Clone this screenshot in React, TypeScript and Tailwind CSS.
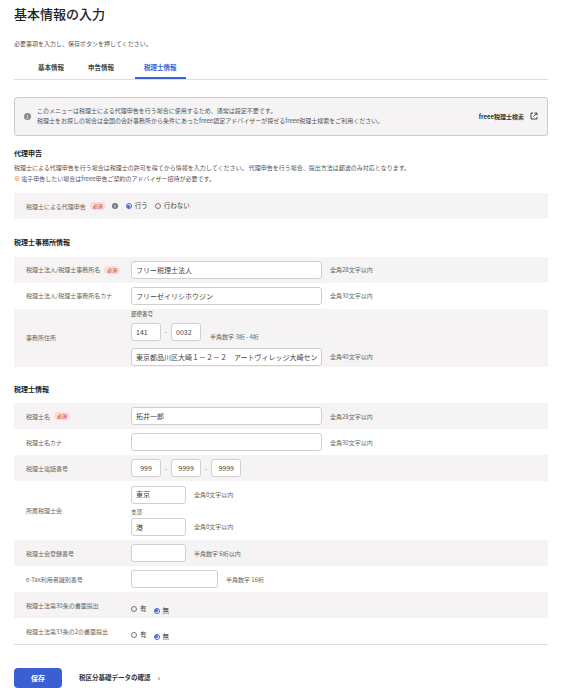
import React from "react";

const F = { fontFamily: '"Noto Sans CJK JP", "Noto Sans", sans-serif' };

const Req = () => (
  <span className="ml-1 rounded-sm bg-[#f9dede] px-[3px] text-[5px] leading-[8px] text-[#c0392b]">必須</span>
);

const Input = ({ w, value = "" }: { w: string; value?: string }) => (
  <div className={`${w} flex h-[18px] shrink-0 items-center overflow-hidden whitespace-nowrap rounded-[3px] border border-[#cfcfcf] bg-white px-[4px] text-[7px] text-[#444]`}>
    <span className="overflow-hidden">{value}</span>
  </div>
);

const Hint = ({ children }: { children: React.ReactNode }) => (
  <span className="text-[6px] text-[#666]">{children}</span>
);

const Row = ({ label, req, bg, h = "h-[26px]", children }: { label: React.ReactNode; req?: boolean; bg?: boolean; h?: string; children: React.ReactNode }) => (
  <div className={`flex items-center ${h} ${bg ? "bg-[#f5f3f3]" : "bg-white"}`}>
    <div className="flex w-[117px] items-center pl-[12px] text-[6px] text-[#666]">
      {label}
      {req && <Req />}
    </div>
    <div className="flex-1">{children}</div>
  </div>
);

const Radio = ({ on, label }: { on?: boolean; label: string }) => (
  <span className="mr-[7px] inline-flex items-center gap-[3px] text-[6.5px] text-[#444]">
    <span className={`flex h-[6px] w-[6px] items-center justify-center rounded-full border ${on ? "border-[#3a63d8]" : "border-[#777]"}`}>
      {on && <span className="h-[3px] w-[3px] rounded-full bg-[#3a63d8]" />}
    </span>
    {label}
  </span>
);

const Std = ({ value, hint }: { value?: string; hint: string }) => (
  <div className="flex items-center gap-[8px]">
    <Input w="w-[191px]" value={value} />
    <Hint>{hint}</Hint>
  </div>
);

export default function App() {
  return (
    <div style={F} className="h-[688px] w-[562px] bg-white px-[14px] pt-[4px] text-[#222]">
      <h1 className="text-[13px] font-medium leading-[20px]">基本情報の入力</h1>
      <p className="mt-[15px] text-[6px] text-[#555]">必要事項を入力し、保存ボタンを押してください。</p>
      <div className="mt-[15px] flex border-b border-[#ddd] pl-[24px] text-[6.5px] font-bold text-[#444]">
        <div className="pb-[5px]">基本情報</div>
        <div className="ml-[24px] pb-[5px]">申告情報</div>
        <div className="ml-[21px] border-b-2 border-[#3a63d8] px-[9px] pb-[4px] text-[#3a63d8]">税理士情報</div>
      </div>
      <div className="mt-[17px] flex h-[39px] items-center rounded-[3px] border border-[#ccc] bg-[#f5f3f3] px-[9px] text-[6px] text-[#555]">
        <span className="mr-[6px] flex h-[7px] w-[7px] items-center justify-center rounded-full bg-[#888] text-[5px] font-bold text-white">!</span>
        <div className="flex-1 leading-[10px]">
          <div>このメニューは税理士による代理申告を行う場合に使用するため、通常は設定不要です。</div>
          <div>税理士をお探しの場合は全国の会計事務所から条件にあったfreee認定アドバイザーが探せるfreee税理士検索をご利用ください。</div>
        </div>
        <span className="font-bold text-[#333]">freee税理士検索</span>
        <svg className="ml-[6px]" width="8" height="8" viewBox="0 0 8 8" fill="none" stroke="#333" strokeWidth="0.9">
          <path d="M3 1H1v6h6V5M4.5 1H7v2.5M7 1L3.5 4.5" />
        </svg>
      </div>
      <h2 className="mt-[12px] text-[7px] font-bold">代理申告</h2>
      <div className="mt-[4px] text-[6px] leading-[11px] text-[#555]">
        <div>税理士による代理申告を行う場合は税理士の許可を得てから情報を入力してください。 代理申告を行う場合、提出方法は郵送のみ対応となります。</div>
        <div><span className="text-[#c0392b]">※</span> 電子申告したい場合はfreee申告ご契約のアドバイザー招待が必要です。</div>
      </div>
      <div className="mt-[9px] flex h-[26px] items-center bg-[#f5f3f3] pl-[12px] text-[6px] text-[#666]">
        税理士による代理申告<Req />
        <span className="ml-[6px] mr-[8px] flex h-[6px] w-[6px] items-center justify-center rounded-full bg-[#777] text-[4px] font-bold text-white">?</span>
        <Radio on label="行う" />
        <Radio label="行わない" />
      </div>

      <h2 className="mt-[18px] text-[7px] font-bold">税理士事務所情報</h2>
      <div className="mt-[9px]">
        <Row label="税理士法人/税理士事務所名" req bg><Std value="フリー税理士法人" hint="全角28文字以内" /></Row>
        <Row label="税理士法人/税理士事務所名カナ"><Std value="フリーゼイリシホウジン" hint="全角30文字以内" /></Row>
        <Row label="事務所住所" bg h="h-[58px]">
          <div className="text-[5.5px] text-[#555]">郵便番号</div>
          <div className="mt-[2px] flex items-center gap-[4px]">
            <Input w="w-[30px]" value="141" />
            <span className="text-[6px] text-[#555]">-</span>
            <Input w="w-[30px]" value="0032" />
            <span className="ml-[5px]"><Hint>半角数字 3桁 - 4桁</Hint></span>
          </div>
          <div className="mt-[4px]"><Std value="東京都品川区大崎１－２－２　アートヴィレッジ大崎セン" hint="全角40文字以内" /></div>
        </Row>
      </div>

      <h2 className="mt-[17px] text-[7px] font-bold">税理士情報</h2>
      <div className="mt-[9px] border-b border-[#ddd]">
        <Row label="税理士名" req bg><Std value="拓井一郎" hint="全角28文字以内" /></Row>
        <Row label="税理士名カナ"><Std hint="全角30文字以内" /></Row>
        <Row label="税理士電話番号" bg>
          <div className="flex items-center gap-[4px]">
            <Input w="w-[30px] justify-center" value="999" />
            <span className="text-[6px] text-[#555]">-</span>
            <Input w="w-[30px] justify-center" value="9999" />
            <span className="text-[6px] text-[#555]">-</span>
            <Input w="w-[30px] justify-center" value="9999" />
          </div>
        </Row>
        <Row label="所属税理士会" h="h-[59px]">
          <div className="flex items-center gap-[8px]"><Input w="w-[55px]" value="東京" /><Hint>全角8文字以内</Hint></div>
          <div className="mt-[4px] text-[5.5px] text-[#555]">支部</div>
          <div className="mt-[2px] flex items-center gap-[8px]"><Input w="w-[55px]" value="港" /><Hint>全角8文字以内</Hint></div>
        </Row>
        <Row label="税理士会登録番号" bg>
          <div className="flex items-center gap-[8px]"><Input w="w-[55px]" /><Hint>半角数字 6桁以内</Hint></div>
        </Row>
        <Row label="e-Tax利用者識別番号">
          <div className="flex items-center gap-[8px]"><Input w="w-[87px]" /><Hint>半角数字 16桁</Hint></div>
        </Row>
        <Row label="税理士法第30条の書面提出" bg><Radio label="有" /><Radio on label="無" /></Row>
        <Row label="税理士法第33条の2の書面提出"><Radio label="有" /><Radio on label="無" /></Row>
      </div>

      <div className="mt-[23px] flex items-center">
        <button className="h-[20px] w-[48px] rounded-[4px] bg-[#3a5fd0] text-[7px] font-bold text-white">保存</button>
        <span className="ml-[17px] text-[6.5px] font-bold text-[#333]">税区分基礎データの確認</span>
        <span className="ml-[7px] text-[8px] text-[#333]">›</span>
      </div>
    </div>
  );
}
